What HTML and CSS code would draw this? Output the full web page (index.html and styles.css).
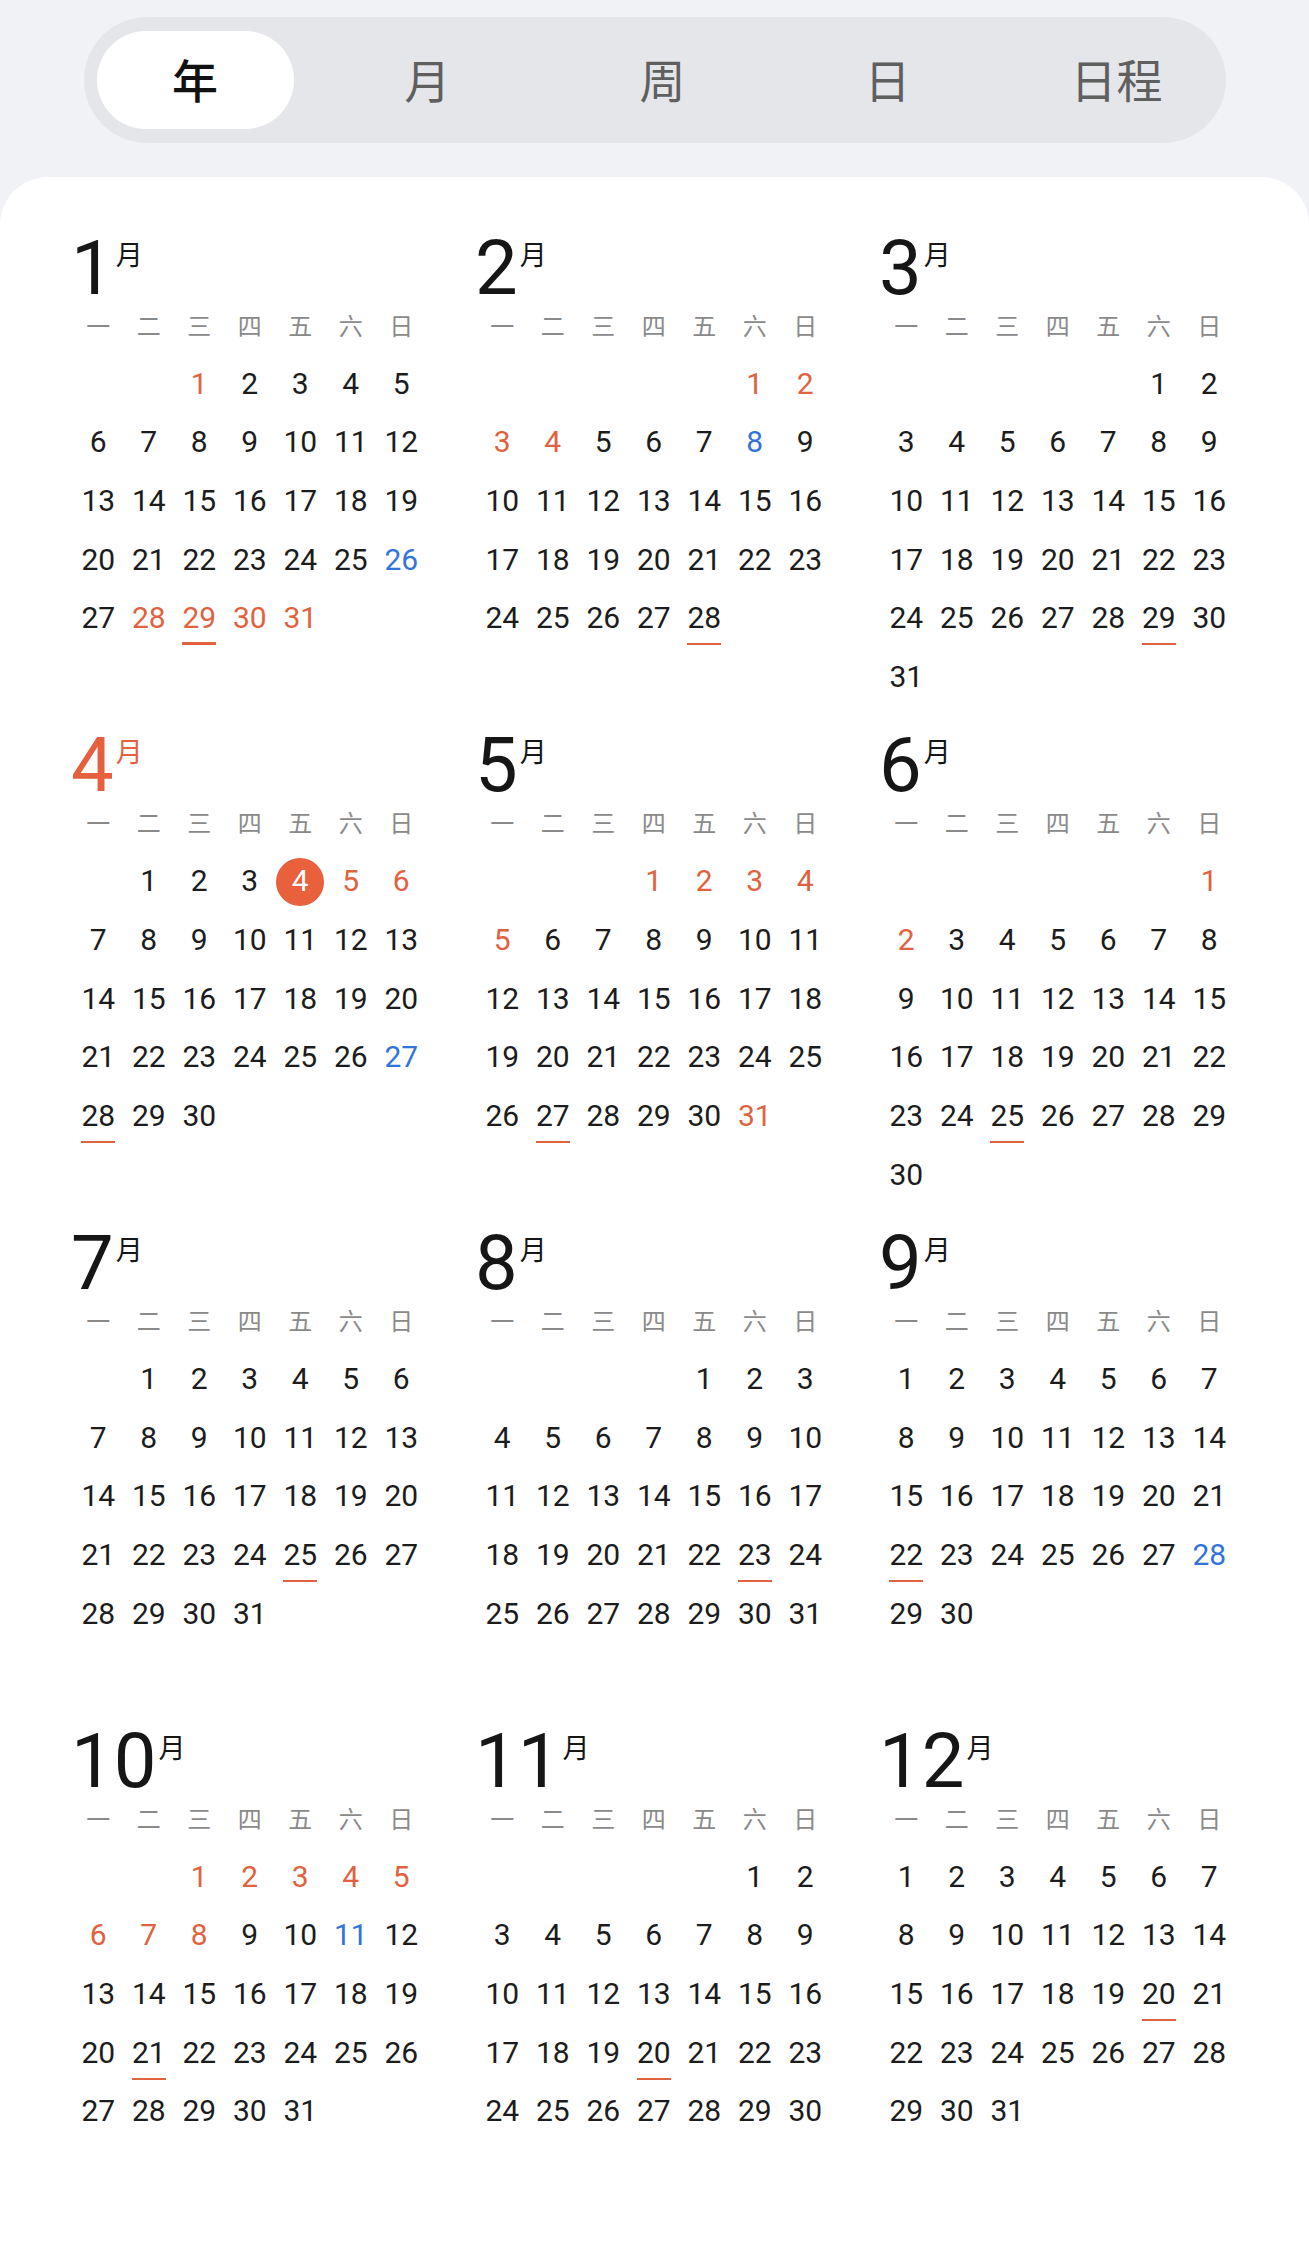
FILE: index.html
```html
<!DOCTYPE html>
<html lang="zh-CN">
<head>
<meta charset="utf-8">
<title>年视图</title>
<link rel="stylesheet" href="styles.css">
</head>
<body>
<div class="page">
  <header class="tabs-wrap">
    <nav class="tabs">
      <div class="tab active">年</div>
      <div class="tab">月</div>
      <div class="tab">周</div>
      <div class="tab">日</div>
      <div class="tab">日程</div>
    </nav>
  </header>
  <main class="card">
    <div class="year">
      <section class="month">
        <div class="title"><span class="num">1</span><span class="yue">月</span></div>
        <div class="weekdays"><span>一</span><span>二</span><span>三</span><span>四</span><span>五</span><span>六</span><span>日</span></div>
        <div class="days"><span class="c3 h">1</span><span>2</span><span>3</span><span>4</span><span>5</span><span>6</span><span>7</span><span>8</span><span>9</span><span>10</span><span>11</span><span>12</span><span>13</span><span>14</span><span>15</span><span>16</span><span>17</span><span>18</span><span>19</span><span>20</span><span>21</span><span>22</span><span>23</span><span>24</span><span>25</span><span class="w">26</span><span>27</span><span class="h">28</span><span class="h u thick">29</span><span class="h">30</span><span class="h">31</span></div>
      </section>
      <section class="month">
        <div class="title"><span class="num">2</span><span class="yue">月</span></div>
        <div class="weekdays"><span>一</span><span>二</span><span>三</span><span>四</span><span>五</span><span>六</span><span>日</span></div>
        <div class="days"><span class="c6 h">1</span><span class="h">2</span><span class="h">3</span><span class="h">4</span><span>5</span><span>6</span><span>7</span><span class="w">8</span><span>9</span><span>10</span><span>11</span><span>12</span><span>13</span><span>14</span><span>15</span><span>16</span><span>17</span><span>18</span><span>19</span><span>20</span><span>21</span><span>22</span><span>23</span><span>24</span><span>25</span><span>26</span><span>27</span><span class="u">28</span></div>
      </section>
      <section class="month">
        <div class="title"><span class="num">3</span><span class="yue">月</span></div>
        <div class="weekdays"><span>一</span><span>二</span><span>三</span><span>四</span><span>五</span><span>六</span><span>日</span></div>
        <div class="days"><span class="c6">1</span><span>2</span><span>3</span><span>4</span><span>5</span><span>6</span><span>7</span><span>8</span><span>9</span><span>10</span><span>11</span><span>12</span><span>13</span><span>14</span><span>15</span><span>16</span><span>17</span><span>18</span><span>19</span><span>20</span><span>21</span><span>22</span><span>23</span><span>24</span><span>25</span><span>26</span><span>27</span><span>28</span><span class="u">29</span><span>30</span><span>31</span></div>
      </section>
      <section class="month current">
        <div class="title"><span class="num">4</span><span class="yue">月</span></div>
        <div class="weekdays"><span>一</span><span>二</span><span>三</span><span>四</span><span>五</span><span>六</span><span>日</span></div>
        <div class="days"><span class="c2">1</span><span>2</span><span>3</span><span class="t">4</span><span class="h">5</span><span class="h">6</span><span>7</span><span>8</span><span>9</span><span>10</span><span>11</span><span>12</span><span>13</span><span>14</span><span>15</span><span>16</span><span>17</span><span>18</span><span>19</span><span>20</span><span>21</span><span>22</span><span>23</span><span>24</span><span>25</span><span>26</span><span class="w">27</span><span class="u">28</span><span>29</span><span>30</span></div>
      </section>
      <section class="month">
        <div class="title"><span class="num">5</span><span class="yue">月</span></div>
        <div class="weekdays"><span>一</span><span>二</span><span>三</span><span>四</span><span>五</span><span>六</span><span>日</span></div>
        <div class="days"><span class="c4 h">1</span><span class="h">2</span><span class="h">3</span><span class="h">4</span><span class="h">5</span><span>6</span><span>7</span><span>8</span><span>9</span><span>10</span><span>11</span><span>12</span><span>13</span><span>14</span><span>15</span><span>16</span><span>17</span><span>18</span><span>19</span><span>20</span><span>21</span><span>22</span><span>23</span><span>24</span><span>25</span><span>26</span><span class="u">27</span><span>28</span><span>29</span><span>30</span><span class="h">31</span></div>
      </section>
      <section class="month">
        <div class="title"><span class="num">6</span><span class="yue">月</span></div>
        <div class="weekdays"><span>一</span><span>二</span><span>三</span><span>四</span><span>五</span><span>六</span><span>日</span></div>
        <div class="days"><span class="c7 h">1</span><span class="h">2</span><span>3</span><span>4</span><span>5</span><span>6</span><span>7</span><span>8</span><span>9</span><span>10</span><span>11</span><span>12</span><span>13</span><span>14</span><span>15</span><span>16</span><span>17</span><span>18</span><span>19</span><span>20</span><span>21</span><span>22</span><span>23</span><span>24</span><span class="u">25</span><span>26</span><span>27</span><span>28</span><span>29</span><span>30</span></div>
      </section>
      <section class="month">
        <div class="title"><span class="num">7</span><span class="yue">月</span></div>
        <div class="weekdays"><span>一</span><span>二</span><span>三</span><span>四</span><span>五</span><span>六</span><span>日</span></div>
        <div class="days"><span class="c2">1</span><span>2</span><span>3</span><span>4</span><span>5</span><span>6</span><span>7</span><span>8</span><span>9</span><span>10</span><span>11</span><span>12</span><span>13</span><span>14</span><span>15</span><span>16</span><span>17</span><span>18</span><span>19</span><span>20</span><span>21</span><span>22</span><span>23</span><span>24</span><span class="u">25</span><span>26</span><span>27</span><span>28</span><span>29</span><span>30</span><span>31</span></div>
      </section>
      <section class="month">
        <div class="title"><span class="num">8</span><span class="yue">月</span></div>
        <div class="weekdays"><span>一</span><span>二</span><span>三</span><span>四</span><span>五</span><span>六</span><span>日</span></div>
        <div class="days"><span class="c5">1</span><span>2</span><span>3</span><span>4</span><span>5</span><span>6</span><span>7</span><span>8</span><span>9</span><span>10</span><span>11</span><span>12</span><span>13</span><span>14</span><span>15</span><span>16</span><span>17</span><span>18</span><span>19</span><span>20</span><span>21</span><span>22</span><span class="u">23</span><span>24</span><span>25</span><span>26</span><span>27</span><span>28</span><span>29</span><span>30</span><span>31</span></div>
      </section>
      <section class="month">
        <div class="title"><span class="num">9</span><span class="yue">月</span></div>
        <div class="weekdays"><span>一</span><span>二</span><span>三</span><span>四</span><span>五</span><span>六</span><span>日</span></div>
        <div class="days"><span class="c1">1</span><span>2</span><span>3</span><span>4</span><span>5</span><span>6</span><span>7</span><span>8</span><span>9</span><span>10</span><span>11</span><span>12</span><span>13</span><span>14</span><span>15</span><span>16</span><span>17</span><span>18</span><span>19</span><span>20</span><span>21</span><span class="u">22</span><span>23</span><span>24</span><span>25</span><span>26</span><span>27</span><span class="w">28</span><span>29</span><span>30</span></div>
      </section>
      <section class="month">
        <div class="title"><span class="num">10</span><span class="yue">月</span></div>
        <div class="weekdays"><span>一</span><span>二</span><span>三</span><span>四</span><span>五</span><span>六</span><span>日</span></div>
        <div class="days"><span class="c3 h">1</span><span class="h">2</span><span class="h">3</span><span class="h">4</span><span class="h">5</span><span class="h">6</span><span class="h">7</span><span class="h">8</span><span>9</span><span>10</span><span class="w">11</span><span>12</span><span>13</span><span>14</span><span>15</span><span>16</span><span>17</span><span>18</span><span>19</span><span>20</span><span class="u">21</span><span>22</span><span>23</span><span>24</span><span>25</span><span>26</span><span>27</span><span>28</span><span>29</span><span>30</span><span>31</span></div>
      </section>
      <section class="month">
        <div class="title"><span class="num">11</span><span class="yue">月</span></div>
        <div class="weekdays"><span>一</span><span>二</span><span>三</span><span>四</span><span>五</span><span>六</span><span>日</span></div>
        <div class="days"><span class="c6">1</span><span>2</span><span>3</span><span>4</span><span>5</span><span>6</span><span>7</span><span>8</span><span>9</span><span>10</span><span>11</span><span>12</span><span>13</span><span>14</span><span>15</span><span>16</span><span>17</span><span>18</span><span>19</span><span class="u">20</span><span>21</span><span>22</span><span>23</span><span>24</span><span>25</span><span>26</span><span>27</span><span>28</span><span>29</span><span>30</span></div>
      </section>
      <section class="month">
        <div class="title"><span class="num">12</span><span class="yue">月</span></div>
        <div class="weekdays"><span>一</span><span>二</span><span>三</span><span>四</span><span>五</span><span>六</span><span>日</span></div>
        <div class="days"><span class="c1">1</span><span>2</span><span>3</span><span>4</span><span>5</span><span>6</span><span>7</span><span>8</span><span>9</span><span>10</span><span>11</span><span>12</span><span>13</span><span>14</span><span>15</span><span>16</span><span>17</span><span>18</span><span>19</span><span class="u">20</span><span>21</span><span>22</span><span>23</span><span>24</span><span>25</span><span>26</span><span>27</span><span>28</span><span>29</span><span>30</span><span>31</span></div>
      </section>
    </div>
  </main>
</div>
</body>
</html>
```

FILE: styles.css
```css
html, body {
  margin: 0;
  padding: 0;
}

body {
  background: #f1f2f6;
  font-family: Roboto, "Noto Sans CJK SC", sans-serif;
  color: #1c1c1c;
}

.page {
  min-height: 100vh;
  display: flex;
  flex-direction: column;
}

/* ---------- segmented tabs ---------- */
.tabs-wrap {
  display: flex;
  justify-content: center;
  padding: 17px 0 34px;
}

.tabs {
  width: 1142px;
  height: 126px;
  box-sizing: border-box;
  padding: 14px 4px 14px 13px;
  background: #e5e6ea;
  border-radius: 63px;
  display: grid;
  grid-template-columns: 197px 268px 202px 248px 1fr;
}

.tab {
  display: flex;
  align-items: center;
  justify-content: center;
  padding-bottom: 5px;
  box-sizing: border-box;
  border-radius: 49px;
  font-family: "Noto Sans CJK SC", sans-serif;
  font-size: 46px;
  color: #5f5f5f;
}

.tab.active {
  background: #ffffff;
  color: #111111;
  font-weight: 500;
}

/* ---------- year card ---------- */
.card {
  flex: 1;
  background: #ffffff;
  border-radius: 48px 48px 0 0;
  padding: 54.5px 74.5px 0 73px;
}

.year {
  display: grid;
  grid-template-columns: repeat(3, 353.5px);
  column-gap: 50.5px;
  row-gap: 23.6px;
}

.title {
  height: 73px;
  display: flex;
  align-items: flex-start;
  margin-left: -2px;
  color: #161616;
}

.num {
  font-size: 76px;
  line-height: 73px;
}

.yue {
  font-family: "Noto Sans CJK SC", sans-serif;
  font-size: 27px;
  line-height: 27px;
  margin-top: 8px;
  margin-left: 2px;
}

.month.current .title {
  color: #e5603e;
}

.weekdays {
  display: grid;
  grid-template-columns: repeat(7, 50.5px);
  height: 42px;
  line-height: 40px;
  margin-bottom: 7px;
  font-family: "Noto Sans CJK SC", sans-serif;
  font-size: 24px;
  color: #8a8a8a;
  text-align: center;
}

.days {
  display: grid;
  grid-template-columns: repeat(7, 50.5px);
  grid-template-rows: repeat(6, 58.7px);
  font-size: 30px;
  line-height: 60px;
  text-align: center;
}

.days span {
  position: relative;
}

.c1 { grid-column-start: 1; }
.c2 { grid-column-start: 2; }
.c3 { grid-column-start: 3; }
.c4 { grid-column-start: 4; }
.c5 { grid-column-start: 5; }
.c6 { grid-column-start: 6; }
.c7 { grid-column-start: 7; }

.h { color: #e0623f; }
.w { color: #3274d9; }

.u::after {
  content: "";
  position: absolute;
  left: 50%;
  top: 55px;
  width: 34px;
  height: 2px;
  margin-left: -17px;
  background: #e0623f;
}

.u.thick::after {
  height: 3px;
  top: 54px;
}

.t {
  z-index: 0;
  color: #ffffff;
}

.t::before {
  content: "";
  position: absolute;
  left: 50%;
  top: 50%;
  width: 48px;
  height: 48px;
  margin: -23px 0 0 -24px;
  border-radius: 50%;
  background: #e8603c;
  z-index: -1;
}
```
